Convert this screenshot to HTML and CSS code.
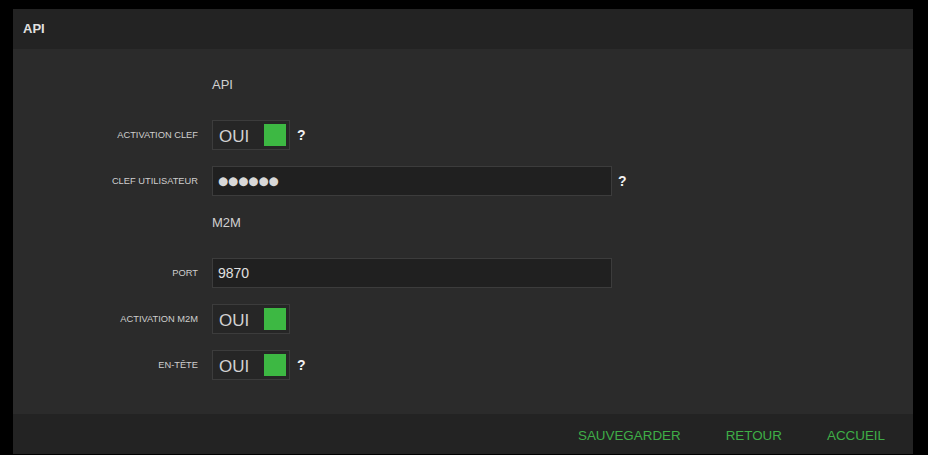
FILE: index.html
```html
<!DOCTYPE html>
<html lang="fr">
<head>
<meta charset="utf-8">
<title>API</title>
<link rel="stylesheet" href="styles.css">
</head>
<body>
<div class="panel">
  <div class="panel-head">API</div>
  <div class="panel-body">
    <div class="section">API</div>
    <div class="row">
      <div class="label">ACTIVATION CLEF</div>
      <div class="toggle"><span class="toggle-text">OUI</span><span class="toggle-box"></span></div>
      <span class="help">?</span>
    </div>
    <div class="row">
      <div class="label">CLEF UTILISATEUR</div>
      <div class="field"><span class="dots">●●●●●●</span></div>
      <span class="help help-field">?</span>
    </div>
    <div class="section">M2M</div>
    <div class="row">
      <div class="label">PORT</div>
      <div class="field"><span class="value">9870</span></div>
    </div>
    <div class="row">
      <div class="label">ACTIVATION M2M</div>
      <div class="toggle"><span class="toggle-text">OUI</span><span class="toggle-box"></span></div>
    </div>
    <div class="row">
      <div class="label">EN-TÊTE</div>
      <div class="toggle"><span class="toggle-text">OUI</span><span class="toggle-box"></span></div>
      <span class="help">?</span>
    </div>
  </div>
  <div class="panel-foot">
    <a class="btn">SAUVEGARDER</a>
    <a class="btn">RETOUR</a>
    <a class="btn">ACCUEIL</a>
  </div>
</div>
</body>
</html>
```
FILE: styles.css
```css
html, body {
  margin: 0;
  padding: 0;
  background: #000;
}
body {
  padding: 9px 15px 0 13px;
  font-family: "Liberation Sans", Arial, sans-serif;
  color: #cfcfcf;
}
.panel {
  width: 900px;
  background: #2b2b2b;
}
.panel-head {
  height: 40px;
  line-height: 40px;
  background: #232323;
  padding-left: 10px;
  font-size: 13px;
  font-weight: bold;
  color: #e0e0e0;
}
.panel-body {
  padding: 25px 0 34px;
  display: flex;
  flex-direction: column;
  gap: 16px;
}
.section {
  margin-left: 199px;
  height: 20px;
  line-height: 22px;
  padding-bottom: 10px;
  font-size: 13px;
  color: #d0d0d0;
}
.row {
  display: flex;
  align-items: center;
  height: 30px;
}
.label {
  width: 185px;
  padding-right: 14px;
  text-align: right;
  font-size: 9.3px;
  color: #cfcfcf;
}
.toggle {
  box-sizing: border-box;
  width: 78px;
  height: 30px;
  border: 1px solid #3c3c3c;
  background: #262626;
  display: flex;
  align-items: center;
  justify-content: space-between;
  padding: 0 3px 0 6px;
}
.toggle-text {
  font-size: 17px;
  line-height: 17px;
  padding-top: 3px;
  color: #d2d2d2;
}
.toggle-box {
  width: 22px;
  height: 22px;
  background: #3db843;
}
.help {
  margin-left: 7px;
  font-size: 14px;
  font-weight: bold;
  color: #f2f2f2;
}
.help-field {
  margin-left: 6px;
}
.field {
  box-sizing: border-box;
  width: 400px;
  height: 30px;
  border: 1px solid #3c3c3c;
  background: #202020;
  display: flex;
  align-items: center;
  padding-left: 5px;
}
.value {
  font-size: 14px;
  color: #e0e0e0;
}
.dots {
  font-family: "DejaVu Sans", sans-serif;
  font-size: 11.6px;
  color: #d8d8d8;
}
.panel-foot {
  height: 40px;
  background: #232323;
  display: flex;
  justify-content: flex-end;
  align-items: center;
  gap: 45px;
  padding-right: 28px;
}
.btn {
  font-size: 13.4px;
  padding-top: 2px;
  color: #3fae47;
  cursor: pointer;
}
```
